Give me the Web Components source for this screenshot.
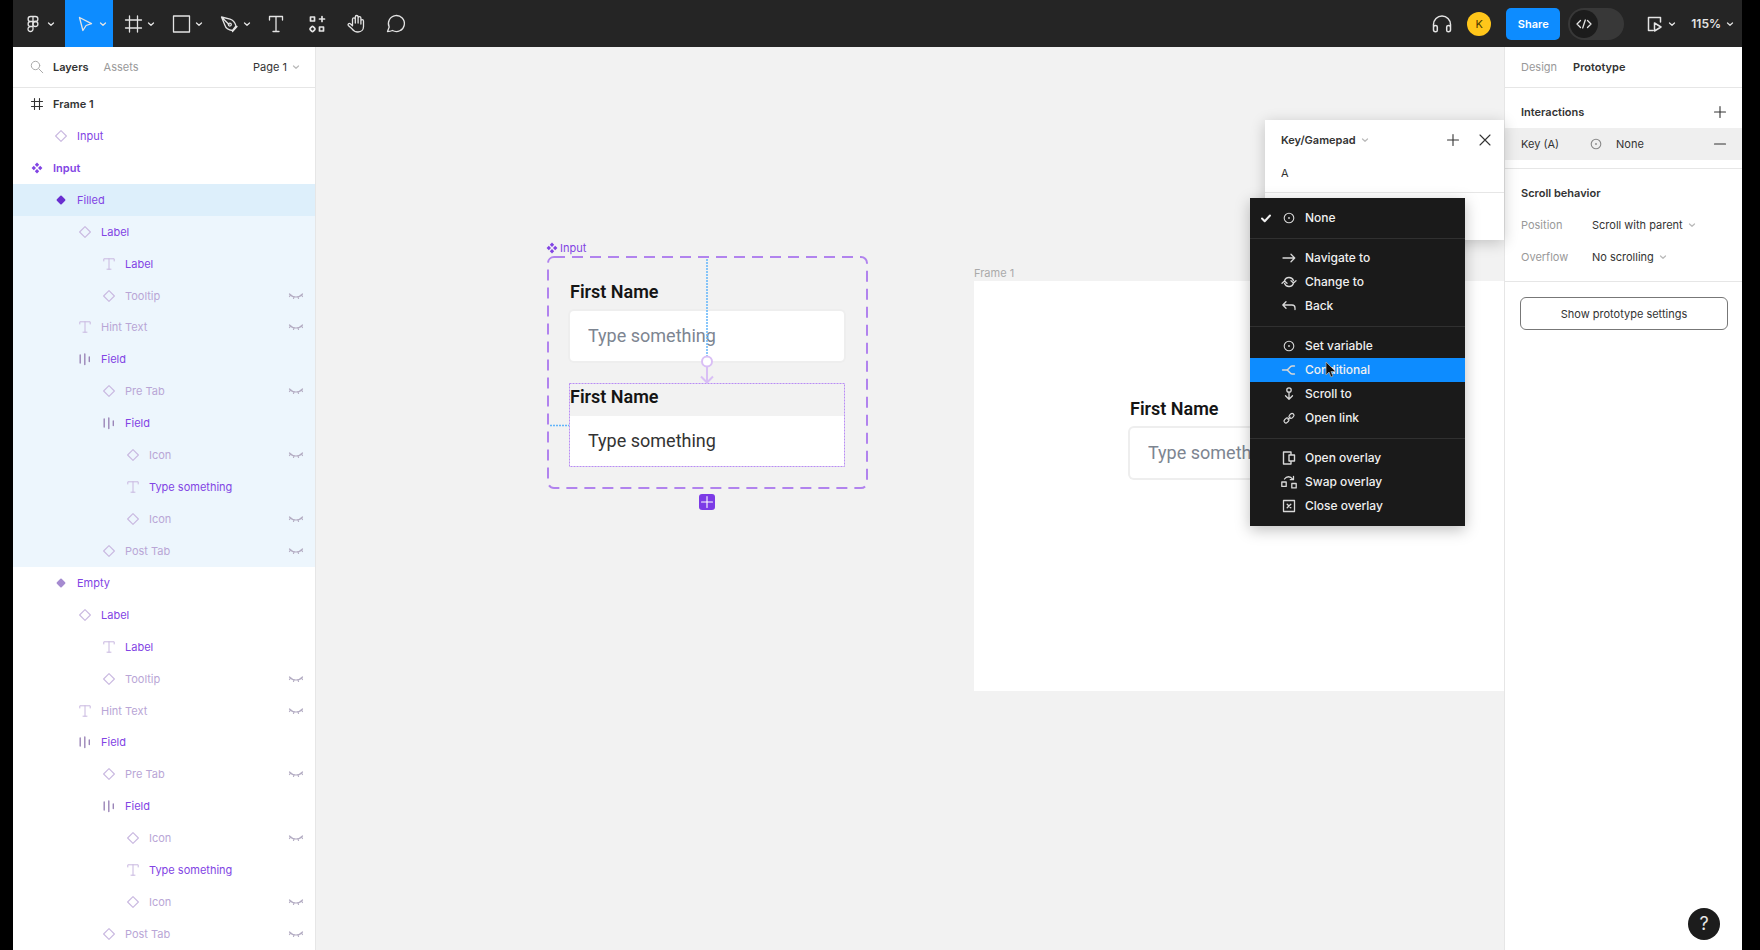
<!DOCTYPE html>
<html lang="en">
<head>
<meta charset="utf-8">
<title>Design editor</title>
<style>
  :root {
    --blue: #0d8cff;
    --purple: #8244e4;
    --purple-dim: #b9a6d6;
    --ink: #333;
    --muted: #999;
    --line: #e6e6e6;
  }
  body { margin: 0; background: #000; color: var(--ink); font: 11px/16px Inter, "Liberation Sans", sans-serif; }
</style>
</head>
<body>
<editor-app></editor-app>

<script>
const ICONS = {
  chevron: [12, '<path d="M3.500 5 6 7.300 8.500 5"/>'],
  figma: [24, '<path d="M12 4.500H9.600a2.500 2.500 0 0 0 0 5H12zM12 4.500h2.400a2.500 2.500 0 0 1 0 5H12zM12 9.500H9.600a2.500 2.500 0 0 0 0 5H12zM12 14.500H9.600a2.500 2.500 0 1 0 2.400 2.500z"/><circle cx="14.400" cy="12" r="2.500"/>'],
  move: [24, '<path d="M6.500 5.500 18.500 11.600l-5.400 1.900L9.900 18.500z"/>'],
  frame: [24, '<path d="M8.500 4v16M16.500 4v16M4.500 8h16M4.500 16h16"/>'],
  rect: [24, '<path d="M4.500 4h16v16h-16z"/>'],
  pen: [24, '<path d="m4.500 5 8.500 2.200c3.500 1 5 3.300 6 6.800l-3.500 4.500c-4-.5-6.500-1.500-7.700-5.500zM4.500 5l7.500 7.500M15.500 19.500l4.500-5"/><circle cx="12.800" cy="12.600" r="1.500"/>'],
  text: [24, '<path d="M4.500 8V4.500h13V8M11 4.500v15M8 19.500h6"/>'],
  resources: [24, '<path d="M5.500 5h4v4h-4zM14.500 15h4v4h-4zM17 4.500v5M14.500 7h5"/><rect x="5.400" y="14.900" width="4.200" height="4.200" rx="1.200" transform="rotate(45 7.500 17)"/>', 1.7],
  hand: [24, '<path d="M7.500 13.500V7.200a1.400 1.400 0 0 1 2.800 0V11M10.300 11V4.900a1.400 1.400 0 0 1 2.800 0V11M13.100 11V6a1.400 1.400 0 0 1 2.800 0v6M15.900 9a1.300 1.300 0 0 1 2.600 0v5.500c0 3-2 5.500-5.500 5.500-3 0-4.500-1-6-3.200L3.300 13.400c-.8-1.500.8-2.600 2-1.600l2.200 2"/>'],
  comment: [24, '<path d="M2.500 19.500 4.200 15A8 8 0 1 1 7.500 18.500c-1.500.7-3 1-5 1z"/>'],
  headphones: [24, '<path d="M3.500 17v-4.500a8.500 8.500 0 0 1 17 0V17M3.500 15.500c0-1.200 1-2 2-2 1.300 0 1.800.6 1.800 1.500v3.200c0 1-.6 1.600-1.700 1.600-1.300 0-2.100-.8-2.100-2zM20.500 15.500c0-1.200-1-2-2-2-1.300 0-1.800.6-1.800 1.500v3.200c0 1 .6 1.600 1.700 1.600 1.300 0 2.100-.8 2.100-2z"/>', 1.500],
  code: [16, '<path d="M4.500 4.500 1 8l3.500 3.500M11.500 4.500 15 8l-3.500 3.500M9.300 4 6.700 12"/>'],
  present: [24, '<path d="M18.500 10V5.500h-12v13h4.500M12.500 11v8l6.500-4z"/>', 1.500],
  search: [16, '<circle cx="6.500" cy="6.500" r="4.200"/><path d="m9.800 9.800 4 4"/>', 1],
  hash: [16, '<path d="M5.500 2.500v11M10.500 2.500v11M2.500 5.500h11M2.500 10.500h11"/>', 1.100],
  diamond: [16, '<path d="M8 2.600 13.400 8 8 13.400 2.600 8z"/>', 1.100],
  variant: [16, '<path d="M8 4.500 11.500 8 8 11.500 4.500 8z" fill="currentColor"/>', 1.800],
  set: [16, '<path d="M8 2.600 10.200 4.800 8 7 5.800 4.800zM8 9l2.200 2.200L8 13.400l-2.200-2.200zM4.800 5.800 7 8l-2.200 2.200L2.600 8zM11.200 5.800 13.400 8l-2.200 2.200L9 8z" fill="currentColor" stroke="none"/>'],
  type: [16, '<path d="M2.800 5V2.800h10.400V5M8 2.800v10.400M6 13.200h4"/>', 1],
  layout: [16, '<path d="M3.200 4v8M7.800 3v10.500M12.300 6v4.500" stroke-width="1.400"/>'],
  hidden: [16, '<path d="M1.500 6c3.500 4 9.500 4 13 0M2.500 7 1.500 8.500M6 8.700 5.500 10.500M10 8.700l.5 1.800M13.500 7l1 1.500"/>', 1.200],
  plus: [16, '<path d="M8 2.500v11M2.500 8h11"/>', 1.100],
  minus: [16, '<path d="M2.500 8h11"/>', 1.100],
  close: [16, '<path d="m3 3 10 10M13 3 3 13"/>', 1.100],
  none: [16, '<circle cx="8" cy="8" r="4.800"/><circle cx="8" cy="8" r=".9" fill="currentColor" stroke="none"/>', 1.100],
  check: [16, '<path d="m4 8.500 2.700 2.700L12 5.500"/>', 2],
  navigate: [16, '<path d="M2 8h11.500M10 4.300 13.700 8 10 11.700"/>'],
  change: [16, '<path d="M3.500 7A4.700 4.700 0 0 1 12.500 6.700M12.500 9A4.700 4.700 0 0 1 3.500 9.300M1 9.300l2.500-2.300L6 9.300M10 6.700l2.500 2.300L15 6.700"/>'],
  back: [16, '<path d="M5 3.700 1.800 7 5 10.300M1.800 7H11c2 0 3 1.200 3 3v1.500"/>'],
  conditional: [16, '<path d="M1.500 8H6M13.500 4H11C8.500 4 8 8 5.500 8 8 8 8.500 12 11 12h2.500"/>'],
  scroll: [16, '<circle cx="8" cy="4" r="2.200"/><path d="M8 6.200V13M4.500 9.800 8 13.300l3.500-3.500"/>'],
  link: [16, '<rect x="7.800" y="4" width="5.400" height="3.800" rx="1.900" transform="rotate(-45 10.500 5.900)"/><rect x="2.800" y="8.600" width="5.400" height="3.800" rx="1.900" transform="rotate(-45 5.500 10.500)"/><path d="m7 9.300 2.200-2.200"/>', 1.200],
  overlay: [16, '<path d="M10 4V2H2.500v12H10v-2M8 5h5.500v6H8z"/>', 1.400],
  swap: [16, '<path d="M.8 8h4.400v4.400H.8zM10.800 9.500h4.400v4.400h-4.400zM3.500 5C5.500 2 9.500 2 11.500 5M12.500 2.500v3.200H9.300"/>', 1.300],
  closeOverlay: [16, '<path d="M2.500 2.500h11v11h-11zM6.200 6.200l3.600 3.600M9.800 6.200 6.200 9.800"/>', 1.300]
};

const define = (name, template, setup) => {
  customElements.define(name, class extends HTMLElement {
    constructor() {
      super();
      this.attachShadow({ mode: 'open' });
    }
    connectedCallback() {
      if (this.shadowRoot.childNodes.length) return;
      const t = document.createElement('template');
      t.innerHTML = `<style>
        *, *::before { box-sizing: border-box; }
        button, select, input { font: inherit; color: inherit; background: none; border: 0; padding: 0; margin: 0; outline: 0; }
        h2, h3, ul { margin: 0; padding: 0; font: inherit; list-style: none; }
        </style>` + (typeof template === 'function' ? template(this) : template);
      this.shadowRoot.append(t.content.cloneNode(true));
      if (setup) setup(this);
    }
  });
};

define('ui-icon', el => {
  const [box, body, width = 1.3] = ICONS[el.getAttribute('name')];
  return `<style>:host { display: block; flex: none; width: ${box}px; height: ${box}px; } svg { display: block; width: 100%; height: 100%; overflow: visible; }</style>
  <svg viewBox="0 0 ${box} ${box}" fill="none" stroke="currentColor" stroke-width="${width}" stroke-linecap="round" stroke-linejoin="round" aria-hidden="true">${body}</svg>`;
});

define('ui-select', el => `<style>
  :host { display: inline-flex; align-items: center; }
  select { appearance: none; field-sizing: content; line-height: 16px; }
  ui-icon { color: var(--chevron, #bbb); margin-left: 3px; pointer-events: none; }
  </style>
  <select aria-label="${el.getAttribute('label')}"><option>${el.getAttribute('value')}</option></select><ui-icon name="chevron"></ui-icon>`);

define('tool-button', el => `<style>
  :host { display: block; }
  button { display: flex; align-items: center; justify-content: center; width: 40px; height: 47px; }
  :host([menu]) button { width: 48px; justify-content: flex-start; padding-left: 8px; }
  :host([wide]) button { width: 52px; }
  :host([active]) button { background: var(--blue); }
  </style>
  <button aria-label="${el.getAttribute('label')}"><ui-icon name="${el.getAttribute('icon')}"></ui-icon>${el.hasAttribute('menu') ? '<ui-icon name="chevron"></ui-icon>' : ''}</button>`);

define('editor-toolbar', `<style>
  :host { display: flex; justify-content: space-between; height: 47px; background: #252525; color: #e4e4e4; --chevron: #ddd; }
  .group { display: flex; align-items: center; }
  .avatar { width: 24px; height: 24px; margin: 0 15px 0 13px; border-radius: 50%; background: #ffc61a; color: #4a3800; }
  .share { width: 54px; height: 32px; border-radius: 5px; background: var(--blue); color: #fff; font-weight: 600; }
  .mode { position: relative; display: flex; align-items: center; width: 56px; height: 32px; margin: 0 18px 0 8px; padding: 2px; border-radius: 16px; background: #383838; }
  .mode input { position: absolute; inset: 0; width: 100%; height: 100%; appearance: none; }
  .knob { display: grid; place-items: center; width: 28px; height: 28px; border-radius: 50%; background: #1c1c1c; }
  .present { display: flex; align-items: center; margin-right: 13px; }
  ui-select { font-size: 12px; font-weight: 600; margin-right: 6px; }
  </style>
  <div class="group">
    <tool-button menu wide icon="figma" label="Main menu"></tool-button>
    <tool-button menu active icon="move" label="Move"></tool-button>
    <tool-button menu icon="frame" label="Frame"></tool-button>
    <tool-button menu icon="rect" label="Rectangle"></tool-button>
    <tool-button menu icon="pen" label="Pen"></tool-button>
    <tool-button icon="text" label="Text"></tool-button>
    <tool-button icon="resources" label="Resources"></tool-button>
    <tool-button icon="hand" label="Hand"></tool-button>
    <tool-button icon="comment" label="Comment"></tool-button>
  </div>
  <div class="group">
    <button aria-label="Audio"><ui-icon name="headphones"></ui-icon></button>
    <button class="avatar">K</button>
    <button class="share">Share</button>
    <label class="mode"><input type="checkbox" role="switch" aria-label="Dev mode"><span class="knob"><ui-icon name="code"></ui-icon></span></label>
    <button class="present" aria-label="Present"><ui-icon name="present"></ui-icon><ui-icon name="chevron"></ui-icon></button>
    <ui-select label="Zoom" value="115%"></ui-select>
  </div>`);

define('layer-row', el => `<style>
  :host { display: flex; align-items: center; min-height: 24px; padding: 0 11px 0 calc(16px + 24px * var(--depth)); color: var(--purple); }
  :host([within]) { background: #edf6fd; }
  :host([selected]) { background: #ddeffb; }
  :host([plain]) { color: var(--ink); }
  :host([strong]) { font-weight: 600; }
  :host([dim]) { color: var(--purple-dim); }
  button { display: flex; align-items: center; gap: 8px; flex: 1; text-align: left; }
  .glyph { color: #c9b8e0; }
  .glyph[name=set], .glyph[name=hash] { color: inherit; }
  .glyph[name=variant] { color: #a58bd0; }
  .glyph[name=layout] { color: #9b85b8; }
  :host([selected]) .glyph { color: #6a2fd0; }
  .eye { flex: none; color: #b5aec4; }
  </style>
  <button><ui-icon class="glyph" name="${el.getAttribute('icon')}"></ui-icon><slot></slot></button>
  ${el.hasAttribute('dim') ? '<button class="eye" aria-label="Show layer"><ui-icon name="hidden"></ui-icon></button>' : ''}`,
  el => el.style.setProperty('--depth', el.getAttribute('depth')));

const variantLayers = [
  [2, 'diamond', 'Label'], [3, 'type', 'Label'], [3, 'diamond', 'Tooltip', 'dim'], [2, 'type', 'Hint Text', 'dim'],
  [2, 'layout', 'Field'], [3, 'diamond', 'Pre Tab', 'dim'], [3, 'layout', 'Field'], [4, 'diamond', 'Icon', 'dim'],
  [4, 'type', 'Type something'], [4, 'diamond', 'Icon', 'dim'], [3, 'diamond', 'Post Tab', 'dim']
];
const layers = [
  [0, 'hash', 'Frame 1', 'plain strong'], [1, 'diamond', 'Input'], [0, 'set', 'Input', 'strong'],
  [1, 'variant', 'Filled', 'selected'], ...variantLayers.map(([d, i, t, f = '']) => [d, i, t, f + ' within']),
  [1, 'variant', 'Empty'], ...variantLayers
];

define('layers-panel', () => `<style>
  :host { display: flex; flex-direction: column; background: #fff; border-right: 1px solid var(--line); min-height: 0; }
  header { display: flex; align-items: center; flex: none; height: 41px; padding: 0 13px 0 16px; border-bottom: 1px solid var(--line); }
  header > ui-icon { color: #aaa; margin-right: 8px; }
  .on { font-weight: 600; margin-right: 15px; }
  .off { color: var(--muted); }
  ui-select { margin-left: auto; }
  .rows { flex: 1; display: grid; grid-auto-rows: 1fr; min-height: 0; }
  </style>
  <header><ui-icon name="search"></ui-icon><button class="on">Layers</button><button class="off">Assets</button><ui-select label="Page" value="Page 1"></ui-select></header>
  <div class="rows">${layers.map(([d, i, t, f = '']) => `<layer-row depth="${d}" icon="${i}" ${f}>${t}</layer-row>`).join('')}</div>`);

define('form-field', el => `<style>
  :host { display: flex; flex-direction: column; gap: 7px; width: 274px; font: 18px/24px Roboto, "Liberation Sans", sans-serif; }
  label { font-weight: 600; color: #151515; }
  input { width: 100%; height: 50px; padding: 0 18px 2px; border-radius: 4px; background: #fff; color: #333; box-shadow: 0 0 0 2px #eee; }
  input::placeholder { color: #7d8591; opacity: 1; }
  :host([filled]) input { border-radius: 0; box-shadow: none; }
  </style>
  <label for="f">First Name</label>
  <input id="f" ${el.hasAttribute('filled') ? 'value' : 'placeholder'}="Type something">`);

define('component-set', `<style>
  :host { display: block; width: 320px; }
  .box { position: relative; display: flex; flex-direction: column; gap: 24px; padding: 24px 23px 23px; }
  .title { position: absolute; left: 0; bottom: 100%; display: flex; align-items: center; margin-left: -3px; color: var(--purple); }
  svg { position: absolute; inset: 0; width: 100%; height: 100%; overflow: visible; pointer-events: none; }
  .add { position: absolute; left: 50%; top: 100%; margin: 5px 0 0 -8px; width: 16px; height: 16px; border-radius: 3px; background: #7c3be6; color: #fff; }
  </style>
  <div class="box">
    <h3 class="title"><ui-icon name="set"></ui-icon>Input</h3>
    <form-field></form-field>
    <form-field filled></form-field>
    <svg fill="none" aria-hidden="true">
      <rect x="1" y="1" width="319" height="231" rx="6" stroke="#b183ee" stroke-width="2" stroke-dasharray="11 7"/>
      <rect x="22.500" y="127.500" width="275" height="83" stroke="#b98cf5" stroke-dasharray="2 1"/>
      <path d="M160 3v98M3 169.500h19" stroke="#62b5fa" stroke-width="1.500" stroke-dasharray="2 1"/>
      <path d="M160 110v16M154 120.500l6 6 6-6" stroke="#d9bff5" stroke-width="2"/>
      <circle cx="160" cy="105.500" r="5" fill="#fff" stroke="#d9bff5" stroke-width="2"/>
    </svg>
    <button class="add" aria-label="Add variant"><ui-icon name="plus"></ui-icon></button>
  </div>`);

define('art-board', `<style>
  :host { display: block; width: 620px; }
  h3 { height: 16px; color: #aaa; }
  .board { height: 410px; padding: 116px 0 0 156px; background: #fff; }
  </style>
  <h3>Frame 1</h3>
  <div class="board"><form-field></form-field></div>`);

define('interaction-popup', `<style>
  :host { display: block; width: 239px; height: 120px; background: #fff; box-shadow: 0 3px 14px rgba(0,0,0,.2); }
  header { display: flex; align-items: center; height: 40px; padding: 0 11px 0 16px; }
  ui-select { font-weight: 600; margin-right: auto; }
  header button { margin-left: 16px; }
  .key { height: 33px; padding: 5px 16px; border-bottom: 1px solid var(--line); }
  input { display: block; width: 100%; line-height: 16px; }
  </style>
  <header><ui-select label="Trigger" value="Key/Gamepad"></ui-select><button aria-label="Add"><ui-icon name="plus"></ui-icon></button><button aria-label="Close"><ui-icon name="close"></ui-icon></button></header>
  <div class="key"><input aria-label="Key" value="A"></div>`);

define('menu-item', el => `<style>
  :host { display: block; }
  button { display: flex; align-items: center; width: 100%; height: 24px; padding-left: 8px; text-align: left; }
  :host([active]) button { background: var(--blue); }
  .tick { width: 16px; margin-right: 7px; }
  button > ui-icon { margin-right: 8px; color: #d8d8d8; }
  </style>
  <button role="menuitem"><span class="tick">${el.hasAttribute('checked') ? '<ui-icon name="check"></ui-icon>' : ''}</span><ui-icon name="${el.getAttribute('icon')}"></ui-icon><slot></slot></button>`);

define('action-menu', `<style>
  :host { display: block; width: 215px; padding: 8px 0; background: #1a1a1a; color: #f0f0f0; font-size: 12px; font-weight: 500; box-shadow: 0 4px 14px rgba(0,0,0,.25); }
  hr { margin: 8px 0 7px; border: 0; border-top: 1px solid #303030; }
  .pointer { position: absolute; left: 75px; top: 163px; width: 12px; height: 18px; }
  </style>
  <menu-item checked icon="none">None</menu-item><hr>
  <menu-item icon="navigate">Navigate to</menu-item>
  <menu-item icon="change">Change to</menu-item>
  <menu-item icon="back">Back</menu-item><hr>
  <menu-item icon="none">Set variable</menu-item>
  <menu-item active icon="conditional">Conditional</menu-item>
  <menu-item icon="scroll">Scroll to</menu-item>
  <menu-item icon="link">Open link</menu-item><hr>
  <menu-item icon="overlay">Open overlay</menu-item>
  <menu-item icon="swap">Swap overlay</menu-item>
  <menu-item icon="closeOverlay">Close overlay</menu-item>
  <svg class="pointer" viewBox="0 0 12 18" aria-hidden="true"><path d="M1 1v13l3-3 2 5 2-1-2-4.500h4.500z" fill="#111" stroke="#aaa" stroke-width=".8"/></svg>`);

define('editor-canvas', `<style>
  :host { display: block; position: relative; z-index: 1; min-width: 0; }
  .stage { position: relative; height: 100%; overflow: hidden; background: #f2f2f2; }
  component-set { position: absolute; left: 231px; top: 209px; }
  art-board { position: absolute; left: 658px; top: 218px; }
  interaction-popup { position: absolute; right: 0; top: 73px; }
  action-menu { position: absolute; right: 39px; top: 151px; }
  </style>
  <div class="stage"><component-set></component-set><art-board></art-board></div>
  <interaction-popup></interaction-popup>
  <action-menu></action-menu>`);

define('prototype-panel', `<style>
  :host { display: flex; flex-direction: column; background: #fff; border-left: 1px solid var(--line); }
  header { display: flex; align-items: center; gap: 16px; height: 41px; padding: 0 16px; border-bottom: 1px solid var(--line); }
  .off { color: var(--muted); }
  .on, h2 { font-weight: 600; }
  section { padding: 8px 0; border-bottom: 1px solid var(--line); }
  .row { display: flex; align-items: center; height: 32px; padding: 0 14px 0 16px; }
  .row > :last-child:is(button) { margin-left: auto; }
  .row.picked { background: #efefef; }
  .name { width: 71px; color: var(--muted); }
  .trigger { width: 67px; text-align: left; }
  .kind { margin-right: 12px; color: #888; }
  .settings { height: 33px; margin: 15px 14px 0 15px; border: 1px solid #777; border-radius: 6px; }
  .help { width: 32px; height: 32px; margin: auto 22px 10px auto; border-radius: 50%; background: #1c1c1c; color: #e6e6e6; font-size: 18px; }
  </style>
  <header><button class="off">Design</button><button class="on">Prototype</button></header>
  <section>
    <div class="row"><h2>Interactions</h2><button aria-label="Add interaction"><ui-icon name="plus"></ui-icon></button></div>
    <div class="row picked"><button class="trigger">Key (A)</button><ui-icon class="kind" name="none"></ui-icon><span>None</span><button aria-label="Remove interaction"><ui-icon name="minus"></ui-icon></button></div>
  </section>
  <section>
    <div class="row"><h2>Scroll behavior</h2></div>
    <div class="row"><span class="name">Position</span><ui-select label="Position" value="Scroll with parent"></ui-select></div>
    <div class="row"><span class="name">Overflow</span><ui-select label="Overflow" value="No scrolling"></ui-select></div>
  </section>
  <button class="settings">Show prototype settings</button>
  <button class="help" aria-label="Help">?</button>`);

define('editor-app', `<style>
  :host { display: flex; flex-direction: column; height: 100vh; padding: 0 18px 0 13px; box-sizing: border-box; overflow: hidden; }
  main { flex: 1; min-height: 0; display: grid; grid-template: minmax(0, 1fr) / 303px minmax(0, 1fr) 238px; }
  </style>
  <editor-toolbar></editor-toolbar>
  <main><layers-panel></layers-panel><editor-canvas></editor-canvas><prototype-panel></prototype-panel></main>`);
</script>
</body>
</html>
